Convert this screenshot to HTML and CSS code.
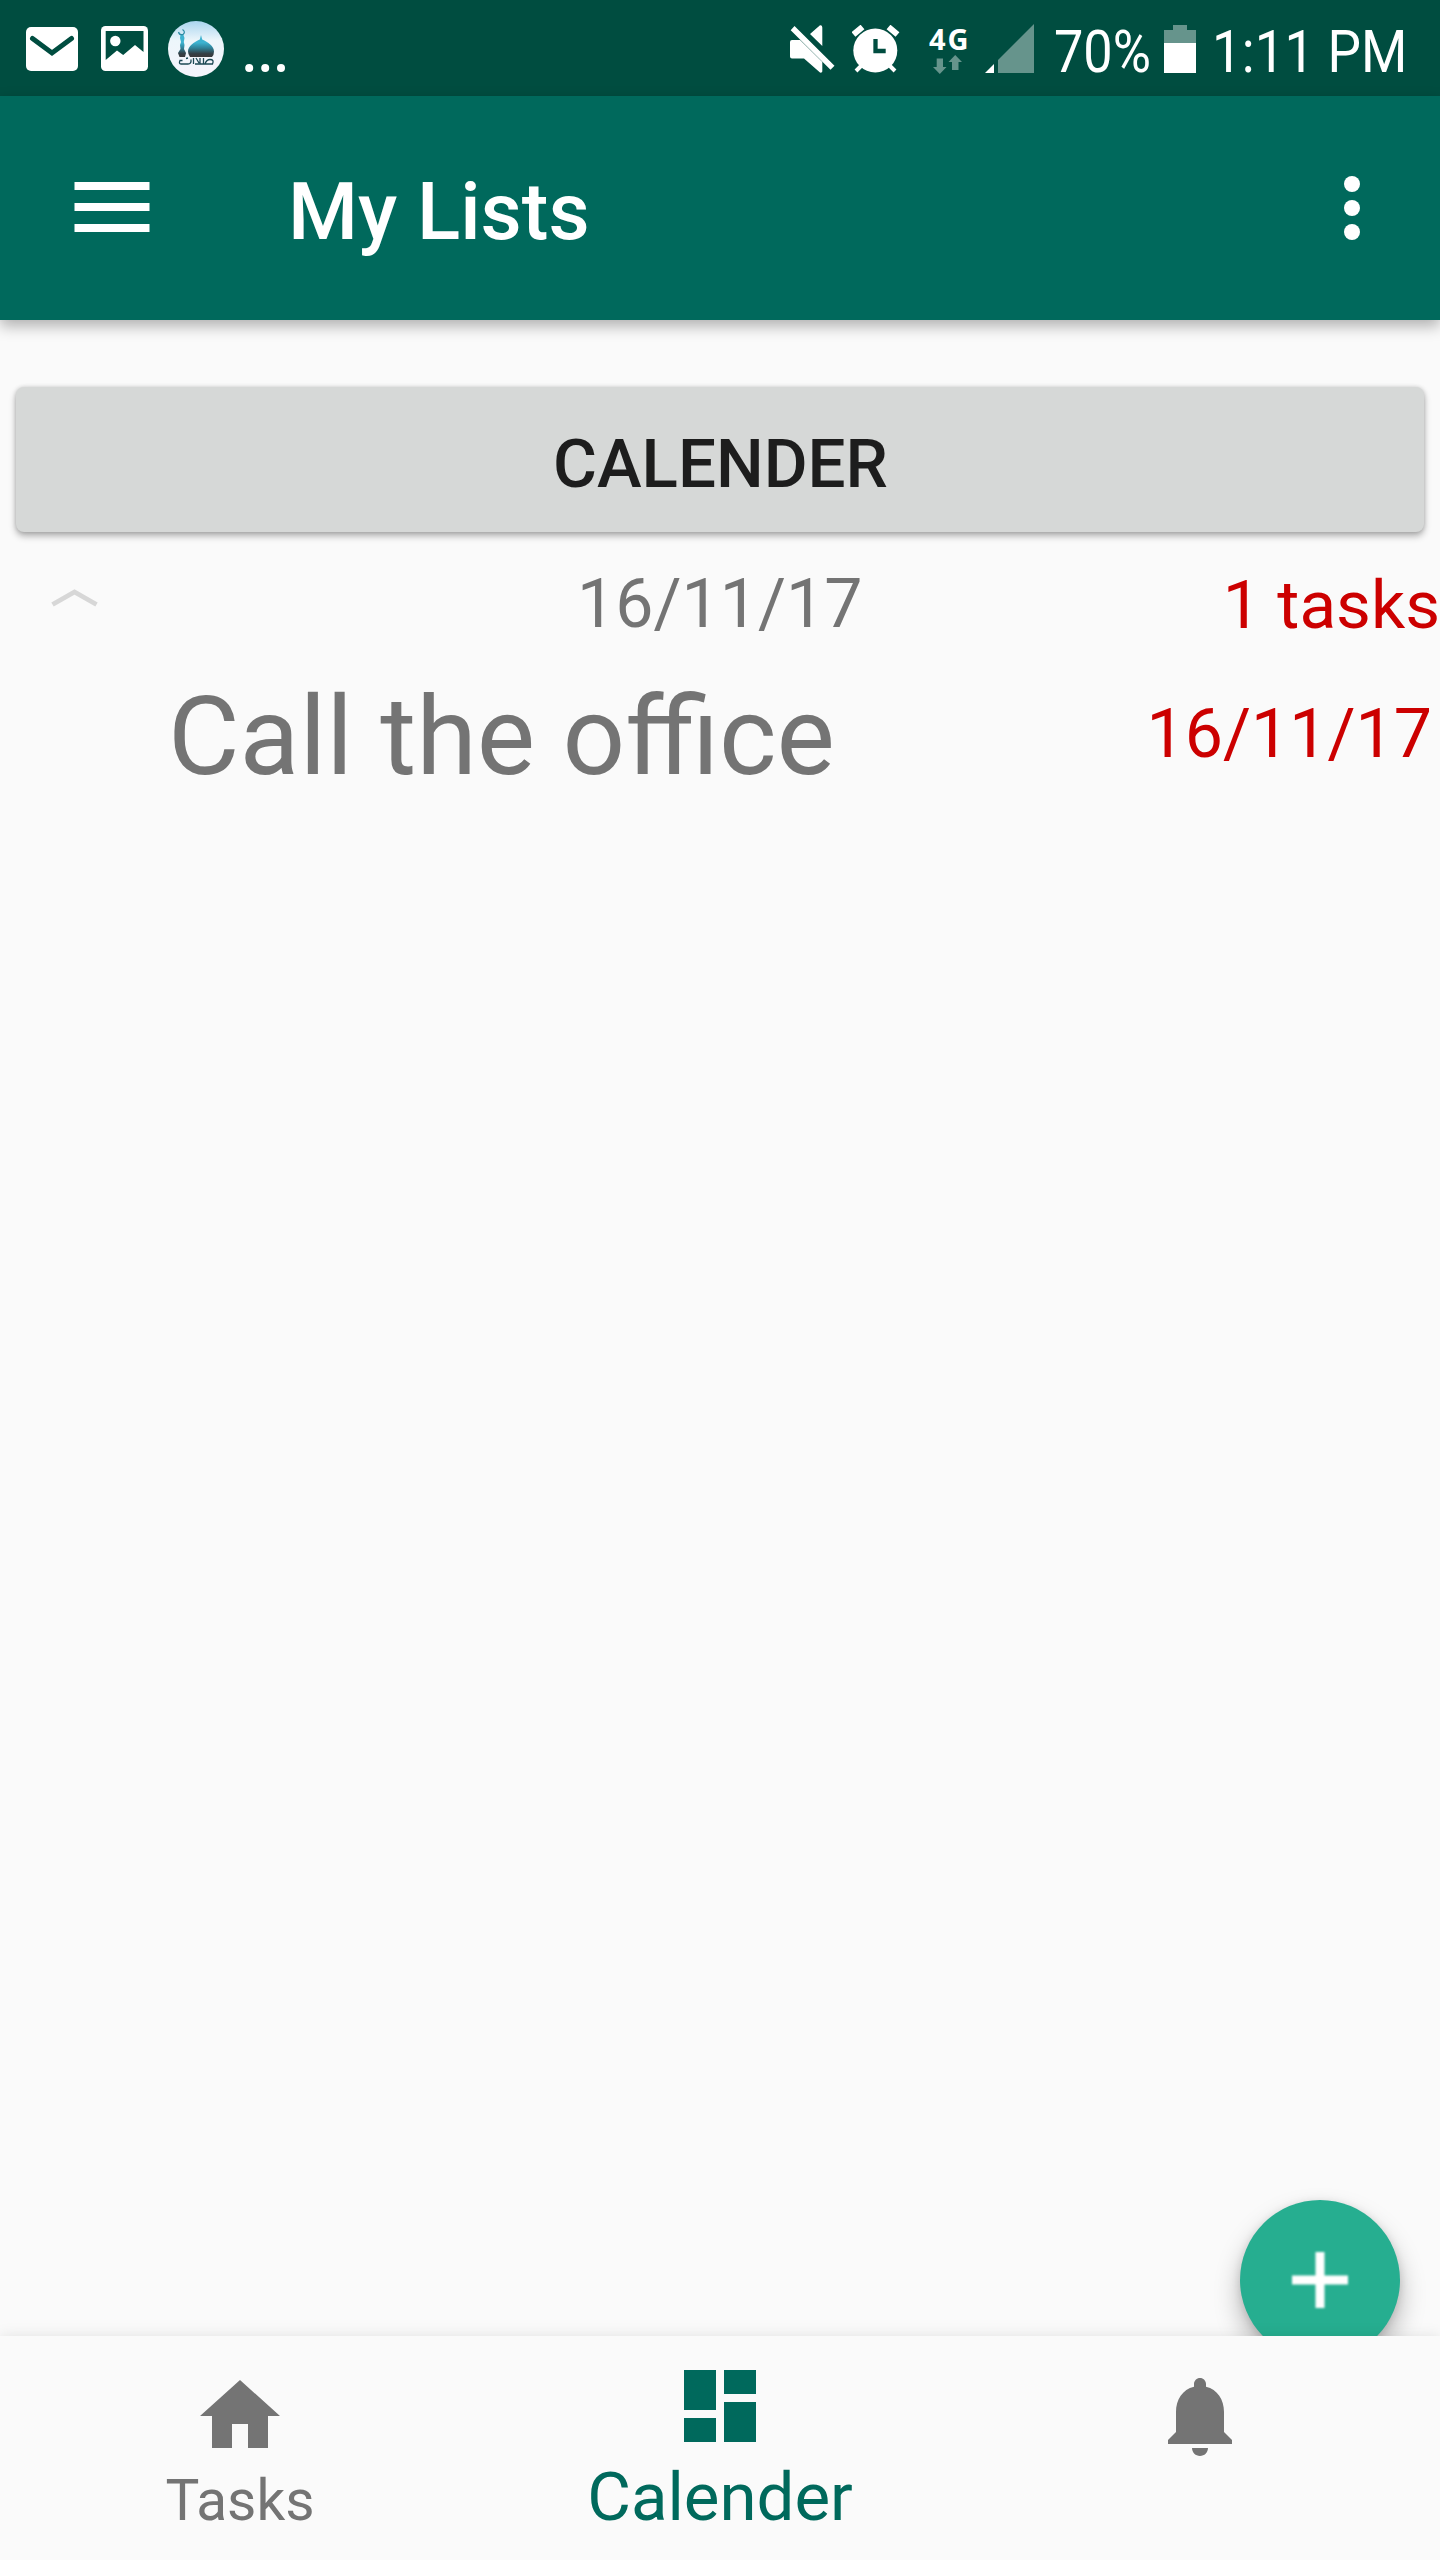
FILE: index.html
```html
<!DOCTYPE html>
<html lang="en">
<head>
<meta charset="utf-8">
<title>My Lists</title>
<link rel="stylesheet" href="styles.css">
</head>
<body>
<div class="screen">
  <div class="status">
    <svg class="ic-mail" width="52" height="44" viewBox="26 27 52 44"><rect x="26" y="27" width="52" height="44" rx="5" fill="#fff"/><path d="M32.5 38.5L52 53L71.5 38.5" fill="none" stroke="#004d40" stroke-width="5" stroke-linecap="round"/></svg>
    <svg class="ic-image" width="47" height="45" viewBox="100.5 26 47 45"><rect x="100.5" y="26" width="47" height="45" rx="4.5" fill="#fff"/><path d="M105.2 31H143V52L134.5 45L122.7 55L116.5 50.5L105.2 60Z" fill="#004d40"/><circle cx="114.8" cy="41" r="5.2" fill="#fff"/></svg>
    <svg class="ic-app" width="56" height="56" viewBox="168 21 56 56">
      <defs>
        <linearGradient id="sky" x1="0" y1="0" x2="0" y2="1"><stop offset="0" stop-color="#a9d5ef"/><stop offset=".35" stop-color="#edf6fb"/><stop offset="1" stop-color="#f5f4fb"/></linearGradient>
        <linearGradient id="dome" gradientUnits="userSpaceOnUse" x1="0" y1="35" x2="0" y2="57"><stop offset="0" stop-color="#3fb2cf"/><stop offset=".35" stop-color="#3cb2d0"/><stop offset=".6" stop-color="#2f7f95"/><stop offset=".85" stop-color="#333f45"/><stop offset="1" stop-color="#3a3a3c"/></linearGradient>
      </defs>
      <circle cx="196" cy="49" r="28" fill="url(#sky)"/>
      <path d="M201 35L202.200 39.500C208 42 214 46 214 51.500Q214 55 212 57H190Q188 54 188 51.500C188 46 194 42 199.800 39.500Z" fill="url(#dome)"/>
      <path d="M180.500 35H183.500L184.500 38L183.800 42L184.500 45L184 49L186 53L185 57H179.500L178 53L180.500 49L180 45L181 42L180 38Z" fill="url(#dome)"/>
      <path d="M182.500 29.500Q186 32 183 34.500Q179.500 35.500 178.500 32" fill="none" stroke="#2b8ba4" stroke-width="1.200"/>
      <path d="M182.500 60.500H180Q178.500 64 181 64H188Q191.500 64 191 59.500M186 58.500L188 58M193.500 58V64M200 58V64M203.500 58V64M195 64H212.500Q214.500 59.500 210 59.500Q206.500 59.500 205 64M196 58L199 63" fill="none" stroke="#1c4854" stroke-width="1.300"/>
    </svg>
    <svg class="ic-more" width="40" height="8" viewBox="0 0 40 8" fill="#fff"><circle cx="4.200" cy="4" r="4"/><circle cx="20.200" cy="4" r="4"/><circle cx="36" cy="4" r="4"/></svg>
    <svg class="ic-mute" width="45" height="48" viewBox="790 25 45 48" fill="#fff"><path d="M790.700 30.200L794.500 26L834.500 65.700L830.500 69.700ZM792 40H800L822.300 62V71.500Q822 73 820 72.500L804 58.500H792Q790 58.500 790 56.500V42Q790 40 792 40ZM810 34L820 25.300Q822.300 25 822.300 27.500V46Z"/></svg>
    <svg class="ic-alarm" width="48" height="48" viewBox="852 25 48 48"><circle cx="875.300" cy="50.500" r="22" fill="#fff"/><path d="M853.500 34.500L862.500 27M888.500 27L897.500 34.500" stroke="#fff" stroke-width="6"/><path d="M856 71L862 65M895 71L889 65" stroke="#fff" stroke-width="4"/><path d="M875.500 39V51H885.700" fill="none" stroke="#004d40" stroke-width="4.300"/></svg>
    <div class="net"><span class="net-label">4G</span>
      <svg width="30" height="20" viewBox="932 55 30 20" fill="#66948c"><path d="M936.700 58.500H943V67H946.500L939.800 74L933 67H936.700ZM952 70V62H948.500L955.200 55L962 62H958.500V70Z"/></svg>
    </div>
    <svg class="ic-signal" width="49" height="49" viewBox="985 24 49 49"><path d="M985 73L994 64V73Z" fill="#fff"/><path d="M998 73V60L1034 24V73Z" fill="#66948c"/></svg>
    <span class="battery-text">70%</span>
    <svg class="ic-battery" width="32" height="48" viewBox="0 0 32 48"><path d="M0 5H9V0H23V5H32V48H0Z" fill="#66948c"/><path d="M0 18H32V48H0Z" fill="#fff"/></svg>
    <span class="clock">1:11 PM</span>
  </div>

  <header class="appbar">
    <svg class="ic-menu" width="76" height="50" viewBox="0 0 76 50" fill="#fff"><path d="M0.500 0H75.500V8H0.500ZM0.500 21H75.500V29H0.500ZM0.500 42H75.500V50H0.500Z"/></svg>
    <h1 class="title">My Lists</h1>
    <svg class="ic-overflow" width="16" height="64" viewBox="0 0 16 64" fill="#fff"><circle cx="8" cy="8" r="8"/><circle cx="8" cy="32" r="8"/><circle cx="8" cy="56" r="8"/></svg>
  </header>

  <main class="content">
    <button class="calendar-btn">CALENDER</button>
    <div class="group">
      <svg class="ic-chevron" width="48" height="20" viewBox="0 0 48 20"><path d="M1.500 16.500L23.500 4L45.500 16.500" fill="none" stroke="#d7d7d7" stroke-width="4.800"/></svg>
      <span class="group-date">16/11/17</span>
      <span class="group-count">1 tasks</span>
    </div>
    <div class="task">
      <span class="task-name">Call the office</span>
      <span class="task-date">16/11/17</span>
    </div>
    <button class="fab" aria-label="Add"><svg class="ic-plus" width="62" height="62" viewBox="-2 -2 62 62"><path d="M29 1V57M1 29H57" stroke="#fff" stroke-width="9"/></svg></button>
  </main>

  <nav class="tabs">
    <div class="tab"><svg width="96" height="96" viewBox="0 0 24 24"><path d="M10 20v-6h4v6h5v-8h3L12 3 2 12h3v8z"/></svg><span class="tab-label">Tasks</span></div>
    <div class="tab active"><svg width="96" height="96" viewBox="0 0 24 24"><path d="M3 13h8V3H3v10zm0 8h8v-6H3v6zm10 0h8V11h-8v10zm0-18v6h8V3h-8z"/></svg><span class="tab-label">Calender</span></div>
    <div class="tab"><svg width="96" height="96" viewBox="0 0 24 24"><path d="M12 22c1.100 0 2-.9 2-2h-4c0 1.100.9 2 2 2zm6-6v-5c0-3.070-1.640-5.640-4.500-6.320V4c0-.83-.67-1.500-1.500-1.500s-1.500.67-1.500 1.500v.68C7.630 5.360 6 7.920 6 11v5l-2 2v1h16v-1l-2-2z"/></svg></div>
  </nav>
</div>
</body>
</html>
```
FILE: styles.css
```css
* { box-sizing: border-box; }
body { margin: 0; background: #fafafa; font-family: Roboto, sans-serif; }
svg { display: block; flex: none; }
button { border: 0; font-family: inherit; }

.screen { width: 1440px; height: 2560px; display: flex; flex-direction: column; overflow: hidden; }

.status { flex: none; height: 96px; padding-left: 26px; display: flex; align-items: flex-start; background: #004d40; color: #fff; }
.ic-mail { margin-top: 27px; }
.ic-image { margin: 26px 0 0 22.5px; }
.ic-app { margin: 21px 0 0 20.5px; }
.ic-more { margin: 64px 0 0 21px; }
.ic-mute { margin: 25px 0 0 505px; }
.ic-alarm { margin: 25px 0 0 17px; }
.net { width: 44px; margin: 25px 0 0 27px; display: flex; flex-direction: column; }
.net-label { margin-left: 2px; height: 30px; font: 700 29px/27px "Open Sans", sans-serif; letter-spacing: 2px; }
.net svg { margin-left: 5px; }
.ic-signal { margin: 24px 0 0 14px; }
.battery-text, .clock { flex: none; font-size: 60px; line-height: 103px; white-space: nowrap; transform-origin: 0 50%; }
.battery-text { width: 99px; margin-left: 20px; transform: scaleX(.87); }
.ic-battery { margin: 25px 0 0 11px; }
.clock { width: 200px; margin-left: 16px; transform: scaleX(.885); }

.appbar { flex: none; position: relative; z-index: 1; height: 224px; padding: 0 80px 0 74px; display: flex; align-items: center; background: #00695c; color: #fff; box-shadow: 0 6px 14px rgba(0, 0, 0, .3); }
.ic-menu { margin-bottom: 2px; }
.title { flex: 1; margin: 7px 0 0 138px; font-size: 80px; line-height: 94px; font-weight: 500; }

.content { flex: 1; position: relative; min-height: 0; overflow: hidden; padding-top: 67px; display: flex; flex-direction: column; }
.calendar-btn { flex: none; height: 145px; margin: 0 16px 12px; padding: 8px 0 0 1px; border-radius: 8px; background: #d6d8d7; color: #1d1d1d; font-size: 67.3px; font-weight: 500; box-shadow: 0 4px 7px rgba(0, 0, 0, .3), 0 0 4px rgba(0, 0, 0, .15); }
.group { flex: none; height: 120px; padding-left: 51px; display: flex; align-items: center; font-size: 68px; color: #747474; }
.ic-chevron { margin-bottom: 12px; }
.group-date { margin-left: 478px; }
.group-count { margin-left: auto; font-size: 67.5px; color: #c00; }
.task { flex: none; height: 147px; padding: 0 8px 0 168px; display: flex; align-items: center; justify-content: space-between; }
.task-name { margin-bottom: 2px; font-size: 110px; color: #747474; }
.task-date { margin-bottom: 7px; font-size: 68px; color: #c00; }
.fab { position: absolute; right: 40px; bottom: -24px; width: 160px; height: 160px; padding: 0; border-radius: 50%; display: flex; align-items: center; justify-content: center; background: #26ae90; box-shadow: 0 14px 26px rgba(0, 0, 0, .28), 0 2px 8px rgba(0, 0, 0, .12); }
.ic-plus { filter: blur(1.2px); }

.tabs { flex: none; position: relative; height: 224px; padding: 0; display: flex; background: #fafafa; box-shadow: 0 0 14px rgba(0, 0, 0, .1); }
.tab { flex: 1; padding-top: 32px; display: flex; flex-direction: column; align-items: center; color: #747474; }
.tab svg { fill: currentColor; }
.tab-label { font-size: 56.8px; line-height: 74px; }
.tab.active { padding-top: 22px; color: #00695c; }
.tab.active .tab-label { margin-top: 3px; font-size: 67.2px; line-height: 80px; }
```
